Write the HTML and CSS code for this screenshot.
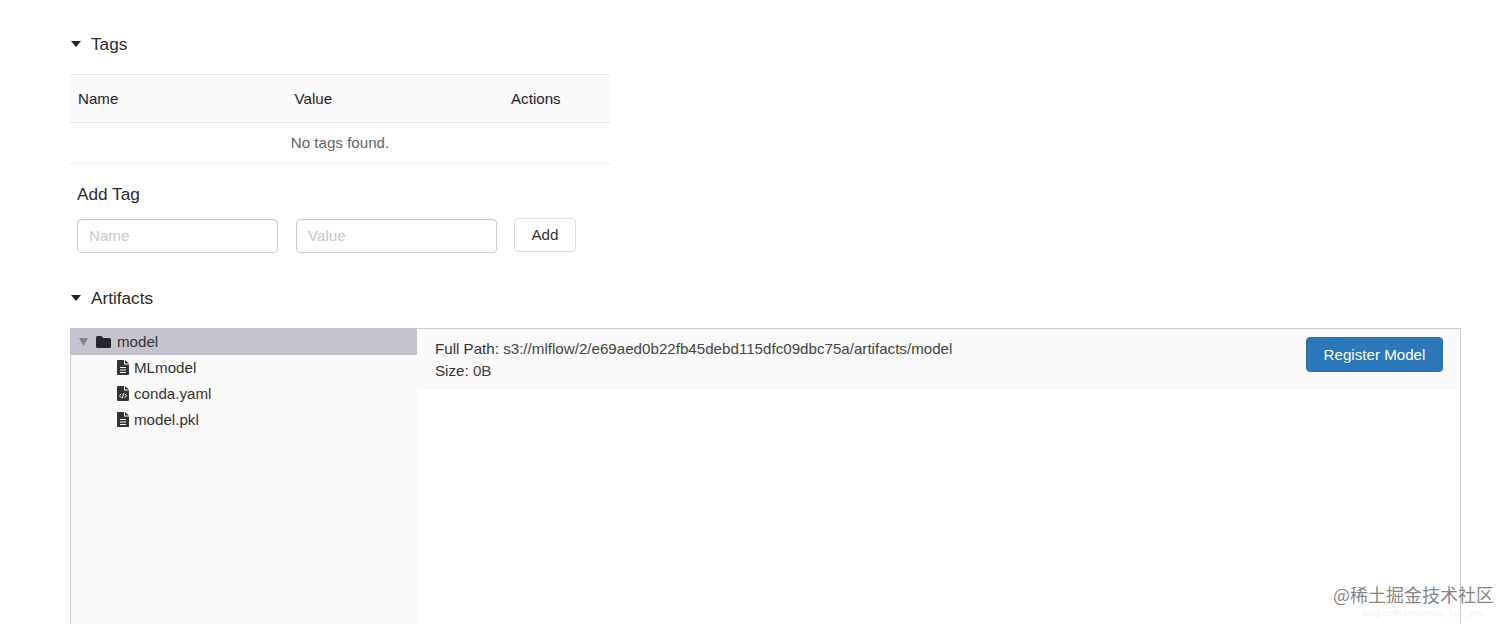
FILE: index.html
```html
<!DOCTYPE html>
<html lang="en">
<head>
<meta charset="utf-8">
<title>Run</title>
<link rel="stylesheet" href="styles.css">
</head>
<body>
<main class="page">
  <section class="tags">
    <h2 class="section-title"><svg class="caret" viewBox="0 0 10 6"><path d="M0 0H10L5 6Z"/></svg>Tags</h2>
    <div class="tag-table">
      <div class="table-head"><span>Name</span><span>Value</span><span>Actions</span></div>
      <div class="table-empty">No tags found.</div>
    </div>
    <div class="add-tag">
      <h3 class="add-title">Add Tag</h3>
      <form class="add-form">
        <input class="field" placeholder="Name">
        <input class="field" placeholder="Value">
        <button class="add-btn" type="button">Add</button>
      </form>
    </div>
  </section>
  <section class="artifacts">
    <h2 class="section-title"><svg class="caret" viewBox="0 0 10 6"><path d="M0 0H10L5 6Z"/></svg>Artifacts</h2>
    <div class="browser">
      <aside class="tree">
        <div class="tree-row selected">
          <svg class="toggle" viewBox="0 0 9 9"><path d="M0 1H9L4.500 9Z"/></svg>
          <svg class="folder" viewBox="0 0 15 12"><path d="M1.500 0H5.500L7 2H13.500A1.500 1.500 0 0 1 15 3.500V10.500A1.500 1.500 0 0 1 13.500 12H1.500A1.500 1.500 0 0 1 0 10.500V1.500A1.500 1.500 0 0 1 1.500 0Z"/></svg>
          <span>model</span>
        </div>
        <div class="tree-row child">
          <svg class="file" viewBox="0 0 12 15"><path fill-rule="evenodd" d="M1 0H7V4.500H12V14A1 1 0 0 1 11 15H1A1 1 0 0 1 0 14V1A1 1 0 0 1 1 0ZM8 0L12 3.500H8ZM3 7V8H9V7ZM3 9.500V10.500H9V9.500ZM3 12V13H9V12Z"/></svg>
          <span>MLmodel</span>
        </div>
        <div class="tree-row child">
          <svg class="file" viewBox="0 0 12 15"><path d="M1 0H7V4.500H12V14A1 1 0 0 1 11 15H1A1 1 0 0 1 0 14V1A1 1 0 0 1 1 0ZM8 0L12 3.500H8Z"/><path class="code" d="M4.200 7.800L2.500 9.800L4.200 11.800M7.800 7.800L9.500 9.800L7.800 11.800M6.600 7.300L5.400 12.300"/></svg>
          <span>conda.yaml</span>
        </div>
        <div class="tree-row child">
          <svg class="file" viewBox="0 0 12 15"><path fill-rule="evenodd" d="M1 0H7V4.500H12V14A1 1 0 0 1 11 15H1A1 1 0 0 1 0 14V1A1 1 0 0 1 1 0ZM8 0L12 3.500H8ZM3 7V8H9V7ZM3 9.500V10.500H9V9.500ZM3 12V13H9V12Z"/></svg>
          <span>model.pkl</span>
        </div>
      </aside>
      <div class="detail">
        <header class="detail-head">
          <div class="meta">
            <div><span class="meta-label">Full Path:</span> s3://mlflow/2/e69aed0b22fb45debd115dfc09dbc75a/artifacts/model</div>
            <div><span class="meta-label">Size:</span> 0B</div>
          </div>
          <button class="register" type="button">Register Model</button>
        </header>
      </div>
    </div>
  </section>
</main>
<div class="watermark">@稀土掘金技术社区</div>
<div class="watermark-sub">blog.csdn.net/weixin_lucy_wei</div>
</body>
</html>
```
FILE: styles.css
```css
* { box-sizing: border-box; }
html, body { height: 100%; }
body {
  margin: 0;
  background: #fff;
  color: #333;
  font-family: "Liberation Sans", Arial, sans-serif;
  font-size: 15.150px;
  overflow: hidden;
}
.page { padding: 30px 51px 0 70px; height: 624px; overflow: hidden; }
.section-title {
  display: flex;
  align-items: center;
  height: 28px;
  margin: 0;
  font-size: 17.200px;
  font-weight: 400;
  color: #2b2b2b;
}
.caret { width: 10px; height: 6px; margin: 0 10px 0 1px; fill: #222; }
.tag-table { width: 540px; margin-top: 16px; }
.table-head {
  display: grid;
  grid-template-columns: 216.500px 216.500px 1fr;
  align-items: center;
  height: 49px;
  padding-left: 8px;
  background: #fafafa;
  border-top: 1px solid #e4e4e4;
  border-bottom: 1px solid #e4e4e4;
  border-radius: 3px 3px 0 0;
  color: #1f1f1f;
}
.table-empty {
  display: flex;
  align-items: center;
  justify-content: center;
  height: 41px;
  padding-bottom: 2px;
  border-bottom: 1px solid #ececec;
  color: #666;
}
.add-tag { padding-left: 7px; margin-top: 17px; }
.add-title { margin: 0; font-size: 17.200px; font-weight: 400; line-height: 26px; color: #2b2b2b; }
.add-form { display: flex; align-items: center; margin-top: 12px; }
.field {
  width: 201px;
  height: 34px;
  margin-right: 18px;
  padding: 0 11px 2px;
  border: 1px solid #ccc;
  border-radius: 4px;
  box-shadow: inset 0 1px 1px rgba(0, 0, 0, .06);
  font: 15.150px "Liberation Sans", Arial, sans-serif;
  color: #333;
}
.field::placeholder { color: #c9c9c9; opacity: 1; }
.add-btn {
  width: 62px;
  height: 34px;
  margin: -2px 0 0 -1px;
  padding-bottom: 3px;
  background: #fff;
  border: 1px solid #ddd;
  border-radius: 4px;
  color: #333;
  font: 15.150px "Liberation Sans", Arial, sans-serif;
}
.artifacts { margin-top: 31px; }
.browser {
  display: flex;
  height: 320px;
  margin-top: 16px;
  border: 1px solid #ccc;
  border-bottom: 0;
}
.tree { flex: 0 0 346px; background: #fafafa; margin-top: -1px; }
.tree-row { display: flex; align-items: center; height: 26px; color: #333; }
.tree-row.selected { height: 27px; margin-left: -1px; background: #c5c3cf; padding-left: 9px; }
.tree-row.child { padding: 0 0 2px 46px; }
.toggle { width: 9px; height: 9px; fill: #85838f; margin-right: 8px; }
.folder { width: 15px; height: 12px; fill: #26262c; margin-right: 6px; }
.file { width: 12px; height: 15px; fill: #333; margin-right: 5px; }
.code { fill: none; stroke: #fff; stroke-width: 1; }
.detail { flex: 1; }
.detail-head {
  display: flex;
  justify-content: space-between;
  height: 61px;
  padding: 8px 17px 0 18px;
  background: #fafafa;
}
.meta { line-height: 22px; padding-top: 1px; color: #444; }
.meta-label { color: #333; }
.register {
  width: 137px;
  height: 35px;
  background: #2a77b9;
  border: 1px solid #2a6ea9;
  border-radius: 4px;
  color: #fff;
  font: 15.150px "Liberation Sans", Arial, sans-serif;
}
.watermark {
  position: absolute;
  left: 1333px;
  top: 582px;
  font: 18px "Noto Sans CJK SC", sans-serif;
  color: rgba(90, 90, 90, .75);
  line-height: 24px;
  white-space: nowrap;
}
.watermark-sub {
  position: absolute;
  left: 1363px;
  top: 608px;
  font: 9px "Liberation Sans", sans-serif;
  color: #f0f0f0;
  white-space: nowrap;
}
```
